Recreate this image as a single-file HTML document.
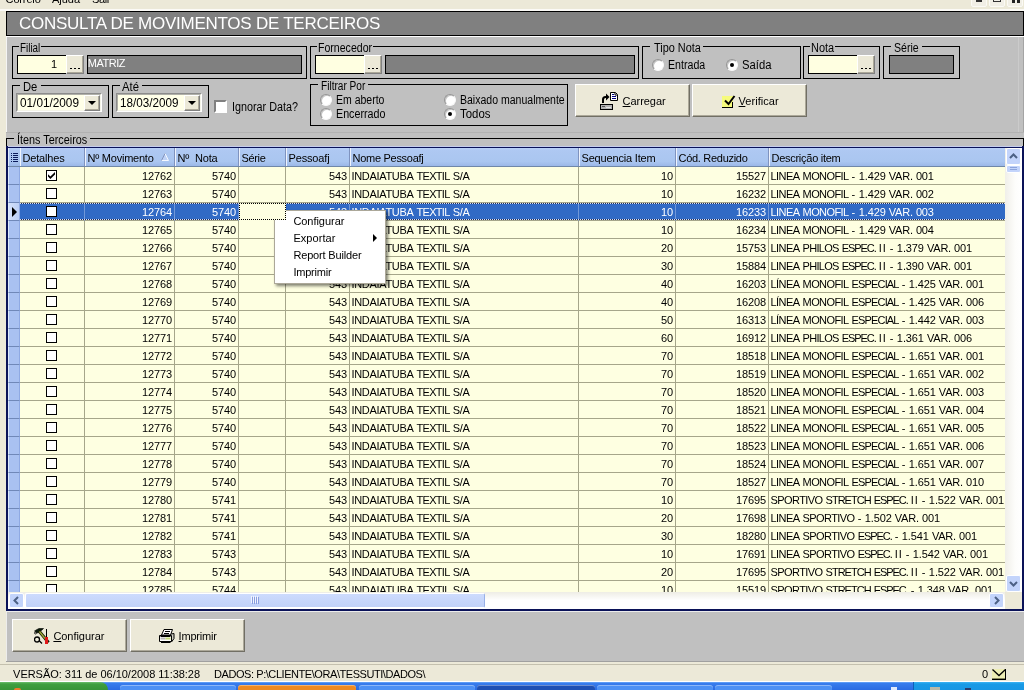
<!DOCTYPE html>
<html lang="pt-BR">
<head>
<meta charset="utf-8">
<title>Consulta de Movimentos de Terceiros</title>
<style>
*{box-sizing:border-box;margin:0;padding:0}
html,body{width:1024px;height:690px;overflow:hidden}
#root{position:absolute;left:0;top:0;width:1024px;height:690px;will-change:transform}
body{position:relative;background:#ece9d8;font-family:"Liberation Sans",sans-serif;font-size:11px;color:#000;line-height:1}
.abs,.gb,.gl,.inp,.dots,.dark,.btn,.date,.rad,.chk,.txt{position:absolute}
/* frame */
#menubar{position:absolute;left:0;top:0;width:1024px;height:9px;background:#ece9d8;overflow:hidden}
#menubar span{position:absolute;top:-6px;font-size:11px;white-space:nowrap}
.wb{position:absolute;top:-10px;width:16px;height:17px;background:#f1efe6;border:1px solid #fbfaf5;border-radius:2px;overflow:hidden}
.wb i{position:absolute;background:#333;margin-top:9px}
#hl{position:absolute;left:0;top:9px;width:1024px;height:2px;background:#fbfaf6}
#panel{position:absolute;left:6px;top:11px;width:1018px;height:651px;background:#c0c0c0}
#title{position:absolute;left:6px;top:11px;width:1018px;height:25px;background:#808080;border:1px solid #000}
#title span{position:absolute;top:3px;color:#fff;white-space:nowrap}
#tline{position:absolute;left:6px;top:36px;width:1018px;height:1px;background:#fff}
/* group boxes */
.gb{border:1px solid #000}
.gl{font-size:12px;white-space:nowrap;height:12px;line-height:12px}
.gap{position:absolute;height:1px;background:#c0c0c0}
.inp{background:#ffffe1;border:1px solid #000;border-right:none;height:19px;font-size:11px;text-align:right;line-height:17px;padding-right:9px}
.dots{background:#ece9d8;height:19px;width:18px;border-top:1px solid #fff;border-left:1px solid #fff;border-right:1px solid #808080;border-bottom:1px solid #808080;box-shadow:inset -1px -1px 0 #aca899}
.dots i{position:absolute;top:12px;width:2px;height:1px;background:#000}
.dark{background:#808080;border:1px solid #000;height:19px;color:#fff;font-size:11px;line-height:15px;padding-left:1px}
.btn{background:#ece9d8;height:33px;border-top:1px solid #fff;border-left:1px solid #fff;border-right:1px solid #716f64;border-bottom:1px solid #716f64;box-shadow:inset -1px -1px 0 #aca899}
.btn .t{position:absolute;font-size:11px;white-space:nowrap}
.btn u{text-decoration:underline}
.date{height:19px;width:86px;background:#ffffe8;border:2px solid;border-color:#8c8c8c #fff #fff #8c8c8c}
.date:before{content:"";position:absolute;left:-1px;top:-1px;right:-1px;bottom:-1px;border:1px solid;border-color:#b0b0a8 #f4f4e8 #f4f4e8 #b0b0a8}
.date span{position:absolute;top:2px;font-size:12px;line-height:13px;white-space:nowrap}
.date b{position:absolute;right:0px;top:0px;width:16px;height:16px;background:#ece9d8;border-top:1px solid #fff;border-left:1px solid #fff;border-right:1px solid #808080;border-bottom:1px solid #808080;box-shadow:inset -1px -1px 0 #aca899}
.date b:after{content:"";position:absolute;left:3px;top:5px;border-left:4px solid transparent;border-right:4px solid transparent;border-top:4px solid #000}
.rad{width:12px;height:12px;border-radius:50%;background:#fff;border:1px solid;border-color:#949494 #f8f8f8 #f8f8f8 #949494;box-shadow:inset 1px 1px 0 #c4c4c4}
.rad.on:after{content:"";position:absolute;left:3px;top:3px;width:4px;height:4px;border-radius:50%;background:#000}
.txt{font-size:12px;white-space:nowrap;line-height:13px}
.chk{width:13px;height:13px;background:#fff;border:2px solid;border-color:#808080 #fff #fff #808080}
/* grid */
#ggb{position:absolute;left:6px;top:138px;width:1018px;height:473px;border:1px solid #000;border-bottom:none}
#grid{position:absolute;left:6px;top:146px;width:1018px;height:465px;background:#feffe1;border:2px solid #0a1258;overflow:hidden}
#ghead{position:absolute;left:8px;top:148px;width:997px;height:19px;background:linear-gradient(#b8d0f8 0,#aec8f2 15%,#aac6f0 75%,#9cb8e8 100%);border-bottom:1px solid #7088a8}
.hc{position:absolute;top:148px;height:18px;border-left:1px solid #eef3fd;border-right:1px solid #7f93bf;font-size:11px;line-height:21px;padding-left:1.5px;white-space:nowrap;overflow:hidden;color:#000}
.hc .sorta{position:absolute;left:75px;top:5px}
.row{position:absolute;left:0;width:1005px;height:18px}
.row .ind{position:absolute;left:8px;top:0;width:12px;height:18px;background:#a9c1f1;border-left:1px solid #dde9fc;border-right:1px solid #8fa9e3;border-bottom:1px solid #7088b8}
.row .c{position:absolute;top:0;height:18px;border-right:1px solid #a6a68a;border-bottom:1px solid #a6a68a;background:#feffe1;font-size:11px;line-height:18px;white-space:nowrap;overflow:hidden}
.row .c.ar{text-align:right;padding-right:2px}
.row .c.al{padding-left:1.5px}
.row .c.ac{text-align:center}
.row.sel .c{background:#316ac5;color:#fff;border-right-color:#7097d8}
.row.sel .dot{position:absolute;left:20px;width:985px;height:1px;background:repeating-linear-gradient(90deg,#dde4f2 0 1px,#1c2c60 1px 2px)}
.row.sel .c.foc{background:#feffe1;border:1px dotted #000;z-index:2;height:17px}
.row.sel .ind{background:linear-gradient(90deg,#d4e0fa,#bccff5)}
.cur{position:absolute;left:3px;top:4px;border-top:5px solid transparent;border-bottom:5px solid transparent;border-left:5px solid #000}
.cb{position:absolute;left:26px;top:3px;width:11px;height:11px;border:1px solid #000;background:#fff}
.cb svg{position:absolute;left:0;top:0}
/* menu */
#ctx{position:absolute;left:274px;top:210px;width:112px;height:74px;background:#fff;border:1px solid #aca899;box-shadow:2px 2px 3px rgba(0,0,0,.5)}
#ctx div{position:absolute;left:18.4px;font-size:11px;white-space:nowrap;line-height:13px}
#ctx i{position:absolute;left:98px;top:23px;border-top:4px solid transparent;border-bottom:4px solid transparent;border-left:4px solid #000}
/* status */
#status{position:absolute;left:0;top:662px;width:1024px;height:20px;background:#ece9d8;border-top:1px solid #ece9d8;border-bottom:1px solid #fff;box-shadow:inset 0 1px 0 #ece9d8,inset 0 2px 0 #c4c0ae}
#status span{position:absolute;top:6px;font-size:11px;white-space:nowrap}
#task{position:absolute;left:0;top:682px;width:1024px;height:8px;background:linear-gradient(#3a80ef,#2a6be2);overflow:hidden}
.tb{top:3px;height:6px;border-radius:3px 3px 0 0;box-shadow:inset 0 1px 0 rgba(255,255,255,.35)}
</style>
</head>
<body>
<div id="root">
<div id="menubar"><span style="left:5.6px;letter-spacing:-0.15px">Correio</span><span style="left:52px;letter-spacing:-0.03px">Ajuda</span><span style="left:92px;letter-spacing:-0.39px">Sair</span></div>
<div class="wb" style="left:971px"><i style="left:4px;top:0;width:6px;height:2px"></i></div>
<div class="wb" style="left:989px"><i style="left:3px;top:-6px;width:8px;height:8px;background:none;border:1px solid #333"></i></div>
<div class="wb" style="left:1007px"><i style="left:4px;top:0;width:3px;height:3px;background:#222"></i><i style="left:9px;top:0;width:3px;height:3px;background:#222"></i></div>
<div id="hl"></div>
<div id="panel"></div>
<div id="title"><span style="left:11.9px;font-size:17px;letter-spacing:-0.25px">CONSULTA DE MOVIMENTOS DE TERCEIROS</span></div>
<div id="tline"></div>
<div class="abs" style="left:6px;top:37px;width:1px;height:95px;background:#f4f4f4"></div>
<div class="abs" style="left:1018px;top:37px;width:1px;height:95px;background:#cbcbcb"></div>
<div class="abs" style="left:1023px;top:37px;width:1px;height:95px;background:#a4a4a4"></div>

<!-- Filial -->
<div class="gb" style="left:12px;top:46px;width:295px;height:33px"></div>
<div class="gap" style="left:19px;top:46px;width:22px"></div>
<div class="gl" style="top:42px;left:20.0px;font-size:12px;transform:scaleX(0.820);transform-origin:0 0">Filial</div>
<div class="inp" style="left:17px;top:55px;width:49px"><span style="">1</span></div>
<div class="dots" style="left:66px;top:55px"><i style="left:3px"></i><i style="left:7px"></i><i style="left:11px"></i></div>
<div class="dark" style="left:87px;top:55px;width:215px"><span class="abs" style="top:0px;left:-0.3px;font-size:11px;letter-spacing:-0.48px">MATRIZ</span></div>
<!-- Fornecedor -->
<div class="gb" style="left:310px;top:46px;width:329px;height:33px"></div>
<div class="gap" style="left:317px;top:46px;width:56px"></div>
<div class="gl" style="top:42px;left:318.3px;font-size:12px;transform:scaleX(0.881);transform-origin:0 0">Fornecedor</div>
<div class="inp" style="left:315px;top:55px;width:49px"></div>
<div class="dots" style="left:364px;top:55px"><i style="left:3px"></i><i style="left:7px"></i><i style="left:11px"></i></div>
<div class="dark" style="left:385px;top:55px;width:250px"></div>
<!-- Tipo Nota -->
<div class="gb" style="left:642px;top:46px;width:159px;height:33px"></div>
<div class="gap" style="left:650px;top:46px;width:53px"></div>
<div class="gl" style="top:42px;left:653.5px;font-size:12px;transform:scaleX(0.909);transform-origin:0 0">Tipo Nota</div>
<div class="rad" style="left:652px;top:59px"></div><div class="txt" style="top:59px;left:668.0px;font-size:12px;transform:scaleX(0.885);transform-origin:0 0">Entrada</div>
<div class="rad on" style="left:726px;top:59px"></div><div class="txt" style="top:59px;left:741.9px;font-size:12px;transform:scaleX(0.939);transform-origin:0 0">Saída</div>
<!-- Nota -->
<div class="gb" style="left:803px;top:46px;width:77px;height:33px"></div>
<div class="gap" style="left:810px;top:46px;width:25px"></div>
<div class="gl" style="top:42px;left:811.3px;font-size:12px;transform:scaleX(0.912);transform-origin:0 0">Nota</div>
<div class="inp" style="left:808px;top:55px;width:49px"></div>
<div class="dots" style="left:857px;top:55px"><i style="left:3px"></i><i style="left:7px"></i><i style="left:11px"></i></div>
<!-- Serie -->
<div class="gb" style="left:883px;top:46px;width:77px;height:33px"></div>
<div class="gap" style="left:891px;top:46px;width:31px"></div>
<div class="gl" style="top:42px;left:894.3px;font-size:12px;transform:scaleX(0.881);transform-origin:0 0">Série</div>
<div class="dark" style="left:889px;top:55px;width:65px"></div>
<!-- De / Ate -->
<div class="gb" style="left:12px;top:85px;width:97px;height:33px"></div>
<div class="gap" style="left:20px;top:85px;width:21px"></div>
<div class="gl" style="top:81px;left:23.0px;font-size:12px;transform:scaleX(0.934);transform-origin:0 0">De</div>
<div class="date" style="left:16px;top:93px"><span style="left:1.8px;font-size:12px;transform:scaleX(0.982);transform-origin:0 0">01/01/2009</span><b></b></div>
<div class="gb" style="left:112px;top:85px;width:97px;height:33px"></div>
<div class="gap" style="left:120px;top:85px;width:22px"></div>
<div class="gl" style="top:81px;left:122.4px;font-size:12px;transform:scaleX(0.941);transform-origin:0 0">Até</div>
<div class="date" style="left:116px;top:93px"><span style="left:1.9px;font-size:12px;transform:scaleX(0.974);transform-origin:0 0">18/03/2009</span><b></b></div>
<div class="chk" style="left:214px;top:100px"></div>
<div class="txt" style="top:101px;left:231.9px;font-size:12px;transform:scaleX(0.898);transform-origin:0 0">Ignorar Data?</div>
<!-- Filtrar Por -->
<div class="gb" style="left:310px;top:84px;width:258px;height:42px"></div>
<div class="gap" style="left:318px;top:84px;width:50px"></div>
<div class="gl" style="top:80px;left:321.0px;font-size:12px;transform:scaleX(0.842);transform-origin:0 0">Filtrar Por</div>
<div class="rad" style="left:320px;top:94px"></div><div class="txt" style="top:94px;left:336.0px;font-size:12px;transform:scaleX(0.874);transform-origin:0 0">Em aberto</div>
<div class="rad" style="left:320px;top:108px"></div><div class="txt" style="top:108px;left:336.0px;font-size:12px;transform:scaleX(0.892);transform-origin:0 0">Encerrado</div>
<div class="rad" style="left:444px;top:94px"></div><div class="txt" style="top:94px;left:460.0px;font-size:12px;transform:scaleX(0.877);transform-origin:0 0">Baixado manualmente</div>
<div class="rad on" style="left:444px;top:108px"></div><div class="txt" style="top:108px;left:459.9px;font-size:12px;transform:scaleX(0.951);transform-origin:0 0">Todos</div>
<!-- buttons -->
<div class="btn" style="left:575px;top:84px;width:115px">
<svg class="abs" style="left:24px;top:7px" width="18" height="18" viewBox="0 0 18 18"><path d="M10.500 0.500H15.500L17.500 2.500V8.500H10.500Z" fill="#fff" stroke="#000"/><path d="M15 1v2h2" fill="none" stroke="#000"/><path d="M12 2.500h2M12 4.500h4M12 6.500h4" stroke="#000080"/><path d="M3 11V7.500Q3 5 5.500 5H7" fill="none" stroke="#000" stroke-width="2"/><path d="M6 1.500L9.500 5L6 8.500Z" fill="#000"/><rect x="0.500" y="12.500" width="12" height="5" fill="#b4b4b4" stroke="#000"/><path d="M2 14.500h3" stroke="#555"/><path d="M6 15.500h5" stroke="#e4e4e4"/></svg>
<span class="t" style="left:46.6px;top:11px;letter-spacing:-0.05px"><u>C</u>arregar</span></div>
<div class="btn" style="left:692px;top:84px;width:115px">
<svg class="abs" style="left:29px;top:9px" width="14" height="15" viewBox="0 0 14 15"><rect x="0" y="2" width="11" height="12" fill="#f6fb7c"/><path d="M0 13.500H11M10.500 8V14" stroke="#000"/><path d="M3 6.500L6.500 10L12.500 2" fill="none" stroke="#000" stroke-width="2"/></svg>
<span class="t" style="left:45.6px;top:11px;letter-spacing:0.03px"><u>V</u>erificar</span></div>

<!-- separators -->
<div class="abs" style="left:6px;top:132px;width:1018px;height:1px;background:#b2b2b2"></div>

<!-- grid -->
<div id="ggb"></div>
<div class="gap" style="left:14px;top:138px;width:76px"></div>
<div class="gl" style="top:134px;left:17.2px;font-size:12px;transform:scaleX(0.902);transform-origin:0 0">Ítens Terceiros</div>
<div id="grid"></div>
<div id="ghead"></div>
<div class="abs" style="left:8px;top:148px;width:12px;height:18px;border-left:1px solid #dfe9fb">
<svg class="abs" style="left:2px;top:5px" width="8" height="10" viewBox="0 0 8 10"><path d="M0 0.500h1M2 0.500h5M0 2.500h1M2 2.500h5M0 4.500h1M2 4.500h5M0 6.500h1M2 6.500h5M0 8.500h1M2 8.500h5" stroke="#0a1a5a"/></svg></div>
<div class="abs" style="left:8px;top:146px;width:1014px;height:1px;background:#c4ccec"></div>
<div class="hc" style="left:20px;width:65px"><span style="letter-spacing:-0.18px">Detalhes</span></div>
<div class="hc" style="left:85px;width:90px"><span style="letter-spacing:-0.23px">Nº Movimento</span><svg class="sorta" width="8" height="8" viewBox="0 0 8 8"><path d="M4 0.500L7.500 7.500H0.500Z" fill="#bfd2f6"/><path d="M4 0.500L7.500 7.500H0.500" fill="none" stroke="#f4f8ff" stroke-width="1"/><path d="M0.500 7.500L4 0.500" fill="none" stroke="#8494bc" stroke-width="1"/></svg></div>
<div class="hc" style="left:175px;width:64px"><span style="letter-spacing:-0.16px">Nº&nbsp; Nota</span></div>
<div class="hc" style="left:239px;width:47px"><span style="letter-spacing:-0.34px">Série</span></div>
<div class="hc" style="left:286px;width:64px"><span style="letter-spacing:-0.15px">Pessoafj</span></div>
<div class="hc" style="left:350px;width:229px"><span style="letter-spacing:-0.28px">Nome Pessoafj</span></div>
<div class="hc" style="left:579px;width:97px"><span style="letter-spacing:-0.17px">Sequencia Item</span></div>
<div class="hc" style="left:676px;width:93px"><span style="letter-spacing:-0.29px">Cód. Reduzido</span></div>
<div class="hc" style="left:769px;width:237px"><span style="letter-spacing:-0.27px">Descrição item</span></div>
<div class="abs" style="left:0;top:0;width:1005px;height:592px;overflow:hidden">
<div class="row" style="top:167px">
<div class="ind"></div>
<div class="c ac" style="left:20px;width:65px"><b class="cb"><svg width="9" height="9" viewBox="0 0 9 9"><path d="M1 3.2 L3.4 5.6 L8 1 L8 3.4 L3.4 8 L1 5.6 Z" fill="#000"/></svg></b></div>
<div class="c ar" style="left:85px;width:90px"><span style="letter-spacing:-0.12px">12762</span></div>
<div class="c ar" style="left:175px;width:64px"><span style="letter-spacing:-0.12px">5740</span></div>
<div class="c al" style="left:239px;width:47px"><span style="letter-spacing:0.00px"></span></div>
<div class="c ar" style="left:286px;width:64px"><span style="letter-spacing:-0.12px">543</span></div>
<div class="c al" style="left:350px;width:229px"><span style="letter-spacing:-0.32px">INDAIATUBA</span> <span style="letter-spacing:-0.71px">TEXTIL</span> <span style="letter-spacing:-0.24px">S/A</span></div>
<div class="c ar" style="left:579px;width:97px"><span style="letter-spacing:-0.12px">10</span></div>
<div class="c ar" style="left:676px;width:93px"><span style="letter-spacing:-0.12px">15527</span></div>
<div class="c al" style="left:769px;width:237px"><span style="letter-spacing:-0.56px">LINEA</span> <span style="letter-spacing:-0.59px">MONOFIL</span> <span style="letter-spacing:0.34px">-</span> <span style="letter-spacing:-0.10px">1.429</span> <span style="letter-spacing:-0.21px">VAR.</span> <span style="letter-spacing:-0.12px">001</span></div>
</div>
<div class="row" style="top:185px">
<div class="ind"></div>
<div class="c ac" style="left:20px;width:65px"><b class="cb"></b></div>
<div class="c ar" style="left:85px;width:90px"><span style="letter-spacing:-0.12px">12763</span></div>
<div class="c ar" style="left:175px;width:64px"><span style="letter-spacing:-0.12px">5740</span></div>
<div class="c al" style="left:239px;width:47px"><span style="letter-spacing:0.00px"></span></div>
<div class="c ar" style="left:286px;width:64px"><span style="letter-spacing:-0.12px">543</span></div>
<div class="c al" style="left:350px;width:229px"><span style="letter-spacing:-0.32px">INDAIATUBA</span> <span style="letter-spacing:-0.71px">TEXTIL</span> <span style="letter-spacing:-0.24px">S/A</span></div>
<div class="c ar" style="left:579px;width:97px"><span style="letter-spacing:-0.12px">10</span></div>
<div class="c ar" style="left:676px;width:93px"><span style="letter-spacing:-0.12px">16232</span></div>
<div class="c al" style="left:769px;width:237px"><span style="letter-spacing:-0.56px">LINEA</span> <span style="letter-spacing:-0.59px">MONOFIL</span> <span style="letter-spacing:0.34px">-</span> <span style="letter-spacing:-0.10px">1.429</span> <span style="letter-spacing:-0.21px">VAR.</span> <span style="letter-spacing:-0.12px">002</span></div>
</div>
<div class="row sel" style="top:203px">
<div class="ind"><i class=cur></i></div>
<div class="c ac" style="left:20px;width:65px"><b class="cb"></b></div>
<div class="c ar" style="left:85px;width:90px"><span style="letter-spacing:-0.12px">12764</span></div>
<div class="c ar" style="left:175px;width:64px"><span style="letter-spacing:-0.12px">5740</span></div>
<div class="c al foc" style="left:239px;width:47px"><span style="letter-spacing:0.00px"></span></div>
<div class="c ar" style="left:286px;width:64px"><span style="letter-spacing:-0.12px">543</span></div>
<div class="c al" style="left:350px;width:229px"><span style="letter-spacing:-0.32px">INDAIATUBA</span> <span style="letter-spacing:-0.71px">TEXTIL</span> <span style="letter-spacing:-0.24px">S/A</span></div>
<div class="c ar" style="left:579px;width:97px"><span style="letter-spacing:-0.12px">10</span></div>
<div class="c ar" style="left:676px;width:93px"><span style="letter-spacing:-0.12px">16233</span></div>
<div class="c al" style="left:769px;width:237px"><span style="letter-spacing:-0.56px">LINEA</span> <span style="letter-spacing:-0.59px">MONOFIL</span> <span style="letter-spacing:0.34px">-</span> <span style="letter-spacing:-0.10px">1.429</span> <span style="letter-spacing:-0.21px">VAR.</span> <span style="letter-spacing:-0.12px">003</span></div>
<div class="dot" style="top:0"></div><div class="dot" style="top:16px"></div>
</div>
<div class="row" style="top:221px">
<div class="ind"></div>
<div class="c ac" style="left:20px;width:65px"><b class="cb"></b></div>
<div class="c ar" style="left:85px;width:90px"><span style="letter-spacing:-0.12px">12765</span></div>
<div class="c ar" style="left:175px;width:64px"><span style="letter-spacing:-0.12px">5740</span></div>
<div class="c al" style="left:239px;width:47px"><span style="letter-spacing:0.00px"></span></div>
<div class="c ar" style="left:286px;width:64px"><span style="letter-spacing:-0.12px">543</span></div>
<div class="c al" style="left:350px;width:229px"><span style="letter-spacing:-0.32px">INDAIATUBA</span> <span style="letter-spacing:-0.71px">TEXTIL</span> <span style="letter-spacing:-0.24px">S/A</span></div>
<div class="c ar" style="left:579px;width:97px"><span style="letter-spacing:-0.12px">10</span></div>
<div class="c ar" style="left:676px;width:93px"><span style="letter-spacing:-0.12px">16234</span></div>
<div class="c al" style="left:769px;width:237px"><span style="letter-spacing:-0.56px">LINEA</span> <span style="letter-spacing:-0.59px">MONOFIL</span> <span style="letter-spacing:0.34px">-</span> <span style="letter-spacing:-0.10px">1.429</span> <span style="letter-spacing:-0.21px">VAR.</span> <span style="letter-spacing:-0.12px">004</span></div>
</div>
<div class="row" style="top:239px">
<div class="ind"></div>
<div class="c ac" style="left:20px;width:65px"><b class="cb"></b></div>
<div class="c ar" style="left:85px;width:90px"><span style="letter-spacing:-0.12px">12766</span></div>
<div class="c ar" style="left:175px;width:64px"><span style="letter-spacing:-0.12px">5740</span></div>
<div class="c al" style="left:239px;width:47px"><span style="letter-spacing:0.00px"></span></div>
<div class="c ar" style="left:286px;width:64px"><span style="letter-spacing:-0.12px">543</span></div>
<div class="c al" style="left:350px;width:229px"><span style="letter-spacing:-0.32px">INDAIATUBA</span> <span style="letter-spacing:-0.71px">TEXTIL</span> <span style="letter-spacing:-0.24px">S/A</span></div>
<div class="c ar" style="left:579px;width:97px"><span style="letter-spacing:-0.12px">20</span></div>
<div class="c ar" style="left:676px;width:93px"><span style="letter-spacing:-0.12px">15753</span></div>
<div class="c al" style="left:769px;width:237px"><span style="letter-spacing:-0.56px">LINEA</span> <span style="letter-spacing:-0.72px">PHILOS</span> <span style="letter-spacing:-1.06px">ESPEC.</span> <span style="letter-spacing:0.94px">II</span> <span style="letter-spacing:0.34px">-</span> <span style="letter-spacing:-0.10px">1.379</span> <span style="letter-spacing:-0.21px">VAR.</span> <span style="letter-spacing:-0.12px">001</span></div>
</div>
<div class="row" style="top:257px">
<div class="ind"></div>
<div class="c ac" style="left:20px;width:65px"><b class="cb"></b></div>
<div class="c ar" style="left:85px;width:90px"><span style="letter-spacing:-0.12px">12767</span></div>
<div class="c ar" style="left:175px;width:64px"><span style="letter-spacing:-0.12px">5740</span></div>
<div class="c al" style="left:239px;width:47px"><span style="letter-spacing:0.00px"></span></div>
<div class="c ar" style="left:286px;width:64px"><span style="letter-spacing:-0.12px">543</span></div>
<div class="c al" style="left:350px;width:229px"><span style="letter-spacing:-0.32px">INDAIATUBA</span> <span style="letter-spacing:-0.71px">TEXTIL</span> <span style="letter-spacing:-0.24px">S/A</span></div>
<div class="c ar" style="left:579px;width:97px"><span style="letter-spacing:-0.12px">30</span></div>
<div class="c ar" style="left:676px;width:93px"><span style="letter-spacing:-0.12px">15884</span></div>
<div class="c al" style="left:769px;width:237px"><span style="letter-spacing:-0.56px">LINEA</span> <span style="letter-spacing:-0.72px">PHILOS</span> <span style="letter-spacing:-1.06px">ESPEC.</span> <span style="letter-spacing:0.94px">II</span> <span style="letter-spacing:0.34px">-</span> <span style="letter-spacing:-0.10px">1.390</span> <span style="letter-spacing:-0.21px">VAR.</span> <span style="letter-spacing:-0.12px">001</span></div>
</div>
<div class="row" style="top:275px">
<div class="ind"></div>
<div class="c ac" style="left:20px;width:65px"><b class="cb"></b></div>
<div class="c ar" style="left:85px;width:90px"><span style="letter-spacing:-0.12px">12768</span></div>
<div class="c ar" style="left:175px;width:64px"><span style="letter-spacing:-0.12px">5740</span></div>
<div class="c al" style="left:239px;width:47px"><span style="letter-spacing:0.00px"></span></div>
<div class="c ar" style="left:286px;width:64px"><span style="letter-spacing:-0.12px">543</span></div>
<div class="c al" style="left:350px;width:229px"><span style="letter-spacing:-0.32px">INDAIATUBA</span> <span style="letter-spacing:-0.71px">TEXTIL</span> <span style="letter-spacing:-0.24px">S/A</span></div>
<div class="c ar" style="left:579px;width:97px"><span style="letter-spacing:-0.12px">40</span></div>
<div class="c ar" style="left:676px;width:93px"><span style="letter-spacing:-0.12px">16203</span></div>
<div class="c al" style="left:769px;width:237px"><span style="letter-spacing:-0.56px">LÍNEA</span> <span style="letter-spacing:-0.59px">MONOFIL</span> <span style="letter-spacing:-0.85px">ESPECIAL</span> <span style="letter-spacing:0.34px">-</span> <span style="letter-spacing:-0.10px">1.425</span> <span style="letter-spacing:-0.21px">VAR.</span> <span style="letter-spacing:-0.12px">001</span></div>
</div>
<div class="row" style="top:293px">
<div class="ind"></div>
<div class="c ac" style="left:20px;width:65px"><b class="cb"></b></div>
<div class="c ar" style="left:85px;width:90px"><span style="letter-spacing:-0.12px">12769</span></div>
<div class="c ar" style="left:175px;width:64px"><span style="letter-spacing:-0.12px">5740</span></div>
<div class="c al" style="left:239px;width:47px"><span style="letter-spacing:0.00px"></span></div>
<div class="c ar" style="left:286px;width:64px"><span style="letter-spacing:-0.12px">543</span></div>
<div class="c al" style="left:350px;width:229px"><span style="letter-spacing:-0.32px">INDAIATUBA</span> <span style="letter-spacing:-0.71px">TEXTIL</span> <span style="letter-spacing:-0.24px">S/A</span></div>
<div class="c ar" style="left:579px;width:97px"><span style="letter-spacing:-0.12px">40</span></div>
<div class="c ar" style="left:676px;width:93px"><span style="letter-spacing:-0.12px">16208</span></div>
<div class="c al" style="left:769px;width:237px"><span style="letter-spacing:-0.56px">LÍNEA</span> <span style="letter-spacing:-0.59px">MONOFIL</span> <span style="letter-spacing:-0.85px">ESPECIAL</span> <span style="letter-spacing:0.34px">-</span> <span style="letter-spacing:-0.10px">1.425</span> <span style="letter-spacing:-0.21px">VAR.</span> <span style="letter-spacing:-0.12px">006</span></div>
</div>
<div class="row" style="top:311px">
<div class="ind"></div>
<div class="c ac" style="left:20px;width:65px"><b class="cb"></b></div>
<div class="c ar" style="left:85px;width:90px"><span style="letter-spacing:-0.12px">12770</span></div>
<div class="c ar" style="left:175px;width:64px"><span style="letter-spacing:-0.12px">5740</span></div>
<div class="c al" style="left:239px;width:47px"><span style="letter-spacing:0.00px"></span></div>
<div class="c ar" style="left:286px;width:64px"><span style="letter-spacing:-0.12px">543</span></div>
<div class="c al" style="left:350px;width:229px"><span style="letter-spacing:-0.32px">INDAIATUBA</span> <span style="letter-spacing:-0.71px">TEXTIL</span> <span style="letter-spacing:-0.24px">S/A</span></div>
<div class="c ar" style="left:579px;width:97px"><span style="letter-spacing:-0.12px">50</span></div>
<div class="c ar" style="left:676px;width:93px"><span style="letter-spacing:-0.12px">16313</span></div>
<div class="c al" style="left:769px;width:237px"><span style="letter-spacing:-0.56px">LÍNEA</span> <span style="letter-spacing:-0.59px">MONOFIL</span> <span style="letter-spacing:-0.85px">ESPECIAL</span> <span style="letter-spacing:0.34px">-</span> <span style="letter-spacing:-0.10px">1.442</span> <span style="letter-spacing:-0.21px">VAR.</span> <span style="letter-spacing:-0.12px">003</span></div>
</div>
<div class="row" style="top:329px">
<div class="ind"></div>
<div class="c ac" style="left:20px;width:65px"><b class="cb"></b></div>
<div class="c ar" style="left:85px;width:90px"><span style="letter-spacing:-0.12px">12771</span></div>
<div class="c ar" style="left:175px;width:64px"><span style="letter-spacing:-0.12px">5740</span></div>
<div class="c al" style="left:239px;width:47px"><span style="letter-spacing:0.00px"></span></div>
<div class="c ar" style="left:286px;width:64px"><span style="letter-spacing:-0.12px">543</span></div>
<div class="c al" style="left:350px;width:229px"><span style="letter-spacing:-0.32px">INDAIATUBA</span> <span style="letter-spacing:-0.71px">TEXTIL</span> <span style="letter-spacing:-0.24px">S/A</span></div>
<div class="c ar" style="left:579px;width:97px"><span style="letter-spacing:-0.12px">60</span></div>
<div class="c ar" style="left:676px;width:93px"><span style="letter-spacing:-0.12px">16912</span></div>
<div class="c al" style="left:769px;width:237px"><span style="letter-spacing:-0.56px">LINEA</span> <span style="letter-spacing:-0.72px">PHILOS</span> <span style="letter-spacing:-1.06px">ESPEC.</span> <span style="letter-spacing:0.94px">II</span> <span style="letter-spacing:0.34px">-</span> <span style="letter-spacing:-0.10px">1.361</span> <span style="letter-spacing:-0.21px">VAR.</span> <span style="letter-spacing:-0.12px">006</span></div>
</div>
<div class="row" style="top:347px">
<div class="ind"></div>
<div class="c ac" style="left:20px;width:65px"><b class="cb"></b></div>
<div class="c ar" style="left:85px;width:90px"><span style="letter-spacing:-0.12px">12772</span></div>
<div class="c ar" style="left:175px;width:64px"><span style="letter-spacing:-0.12px">5740</span></div>
<div class="c al" style="left:239px;width:47px"><span style="letter-spacing:0.00px"></span></div>
<div class="c ar" style="left:286px;width:64px"><span style="letter-spacing:-0.12px">543</span></div>
<div class="c al" style="left:350px;width:229px"><span style="letter-spacing:-0.32px">INDAIATUBA</span> <span style="letter-spacing:-0.71px">TEXTIL</span> <span style="letter-spacing:-0.24px">S/A</span></div>
<div class="c ar" style="left:579px;width:97px"><span style="letter-spacing:-0.12px">70</span></div>
<div class="c ar" style="left:676px;width:93px"><span style="letter-spacing:-0.12px">18518</span></div>
<div class="c al" style="left:769px;width:237px"><span style="letter-spacing:-0.56px">LINEA</span> <span style="letter-spacing:-0.59px">MONOFIL</span> <span style="letter-spacing:-0.85px">ESPECIAL</span> <span style="letter-spacing:0.34px">-</span> <span style="letter-spacing:-0.10px">1.651</span> <span style="letter-spacing:-0.21px">VAR.</span> <span style="letter-spacing:-0.12px">001</span></div>
</div>
<div class="row" style="top:365px">
<div class="ind"></div>
<div class="c ac" style="left:20px;width:65px"><b class="cb"></b></div>
<div class="c ar" style="left:85px;width:90px"><span style="letter-spacing:-0.12px">12773</span></div>
<div class="c ar" style="left:175px;width:64px"><span style="letter-spacing:-0.12px">5740</span></div>
<div class="c al" style="left:239px;width:47px"><span style="letter-spacing:0.00px"></span></div>
<div class="c ar" style="left:286px;width:64px"><span style="letter-spacing:-0.12px">543</span></div>
<div class="c al" style="left:350px;width:229px"><span style="letter-spacing:-0.32px">INDAIATUBA</span> <span style="letter-spacing:-0.71px">TEXTIL</span> <span style="letter-spacing:-0.24px">S/A</span></div>
<div class="c ar" style="left:579px;width:97px"><span style="letter-spacing:-0.12px">70</span></div>
<div class="c ar" style="left:676px;width:93px"><span style="letter-spacing:-0.12px">18519</span></div>
<div class="c al" style="left:769px;width:237px"><span style="letter-spacing:-0.56px">LINEA</span> <span style="letter-spacing:-0.59px">MONOFIL</span> <span style="letter-spacing:-0.85px">ESPECIAL</span> <span style="letter-spacing:0.34px">-</span> <span style="letter-spacing:-0.10px">1.651</span> <span style="letter-spacing:-0.21px">VAR.</span> <span style="letter-spacing:-0.12px">002</span></div>
</div>
<div class="row" style="top:383px">
<div class="ind"></div>
<div class="c ac" style="left:20px;width:65px"><b class="cb"></b></div>
<div class="c ar" style="left:85px;width:90px"><span style="letter-spacing:-0.12px">12774</span></div>
<div class="c ar" style="left:175px;width:64px"><span style="letter-spacing:-0.12px">5740</span></div>
<div class="c al" style="left:239px;width:47px"><span style="letter-spacing:0.00px"></span></div>
<div class="c ar" style="left:286px;width:64px"><span style="letter-spacing:-0.12px">543</span></div>
<div class="c al" style="left:350px;width:229px"><span style="letter-spacing:-0.32px">INDAIATUBA</span> <span style="letter-spacing:-0.71px">TEXTIL</span> <span style="letter-spacing:-0.24px">S/A</span></div>
<div class="c ar" style="left:579px;width:97px"><span style="letter-spacing:-0.12px">70</span></div>
<div class="c ar" style="left:676px;width:93px"><span style="letter-spacing:-0.12px">18520</span></div>
<div class="c al" style="left:769px;width:237px"><span style="letter-spacing:-0.56px">LINEA</span> <span style="letter-spacing:-0.59px">MONOFIL</span> <span style="letter-spacing:-0.85px">ESPECIAL</span> <span style="letter-spacing:0.34px">-</span> <span style="letter-spacing:-0.10px">1.651</span> <span style="letter-spacing:-0.21px">VAR.</span> <span style="letter-spacing:-0.12px">003</span></div>
</div>
<div class="row" style="top:401px">
<div class="ind"></div>
<div class="c ac" style="left:20px;width:65px"><b class="cb"></b></div>
<div class="c ar" style="left:85px;width:90px"><span style="letter-spacing:-0.12px">12775</span></div>
<div class="c ar" style="left:175px;width:64px"><span style="letter-spacing:-0.12px">5740</span></div>
<div class="c al" style="left:239px;width:47px"><span style="letter-spacing:0.00px"></span></div>
<div class="c ar" style="left:286px;width:64px"><span style="letter-spacing:-0.12px">543</span></div>
<div class="c al" style="left:350px;width:229px"><span style="letter-spacing:-0.32px">INDAIATUBA</span> <span style="letter-spacing:-0.71px">TEXTIL</span> <span style="letter-spacing:-0.24px">S/A</span></div>
<div class="c ar" style="left:579px;width:97px"><span style="letter-spacing:-0.12px">70</span></div>
<div class="c ar" style="left:676px;width:93px"><span style="letter-spacing:-0.12px">18521</span></div>
<div class="c al" style="left:769px;width:237px"><span style="letter-spacing:-0.56px">LINEA</span> <span style="letter-spacing:-0.59px">MONOFIL</span> <span style="letter-spacing:-0.85px">ESPECIAL</span> <span style="letter-spacing:0.34px">-</span> <span style="letter-spacing:-0.10px">1.651</span> <span style="letter-spacing:-0.21px">VAR.</span> <span style="letter-spacing:-0.12px">004</span></div>
</div>
<div class="row" style="top:419px">
<div class="ind"></div>
<div class="c ac" style="left:20px;width:65px"><b class="cb"></b></div>
<div class="c ar" style="left:85px;width:90px"><span style="letter-spacing:-0.12px">12776</span></div>
<div class="c ar" style="left:175px;width:64px"><span style="letter-spacing:-0.12px">5740</span></div>
<div class="c al" style="left:239px;width:47px"><span style="letter-spacing:0.00px"></span></div>
<div class="c ar" style="left:286px;width:64px"><span style="letter-spacing:-0.12px">543</span></div>
<div class="c al" style="left:350px;width:229px"><span style="letter-spacing:-0.32px">INDAIATUBA</span> <span style="letter-spacing:-0.71px">TEXTIL</span> <span style="letter-spacing:-0.24px">S/A</span></div>
<div class="c ar" style="left:579px;width:97px"><span style="letter-spacing:-0.12px">70</span></div>
<div class="c ar" style="left:676px;width:93px"><span style="letter-spacing:-0.12px">18522</span></div>
<div class="c al" style="left:769px;width:237px"><span style="letter-spacing:-0.56px">LINEA</span> <span style="letter-spacing:-0.59px">MONOFIL</span> <span style="letter-spacing:-0.85px">ESPECIAL</span> <span style="letter-spacing:0.34px">-</span> <span style="letter-spacing:-0.10px">1.651</span> <span style="letter-spacing:-0.21px">VAR.</span> <span style="letter-spacing:-0.12px">005</span></div>
</div>
<div class="row" style="top:437px">
<div class="ind"></div>
<div class="c ac" style="left:20px;width:65px"><b class="cb"></b></div>
<div class="c ar" style="left:85px;width:90px"><span style="letter-spacing:-0.12px">12777</span></div>
<div class="c ar" style="left:175px;width:64px"><span style="letter-spacing:-0.12px">5740</span></div>
<div class="c al" style="left:239px;width:47px"><span style="letter-spacing:0.00px"></span></div>
<div class="c ar" style="left:286px;width:64px"><span style="letter-spacing:-0.12px">543</span></div>
<div class="c al" style="left:350px;width:229px"><span style="letter-spacing:-0.32px">INDAIATUBA</span> <span style="letter-spacing:-0.71px">TEXTIL</span> <span style="letter-spacing:-0.24px">S/A</span></div>
<div class="c ar" style="left:579px;width:97px"><span style="letter-spacing:-0.12px">70</span></div>
<div class="c ar" style="left:676px;width:93px"><span style="letter-spacing:-0.12px">18523</span></div>
<div class="c al" style="left:769px;width:237px"><span style="letter-spacing:-0.56px">LINEA</span> <span style="letter-spacing:-0.59px">MONOFIL</span> <span style="letter-spacing:-0.85px">ESPECIAL</span> <span style="letter-spacing:0.34px">-</span> <span style="letter-spacing:-0.10px">1.651</span> <span style="letter-spacing:-0.21px">VAR.</span> <span style="letter-spacing:-0.12px">006</span></div>
</div>
<div class="row" style="top:455px">
<div class="ind"></div>
<div class="c ac" style="left:20px;width:65px"><b class="cb"></b></div>
<div class="c ar" style="left:85px;width:90px"><span style="letter-spacing:-0.12px">12778</span></div>
<div class="c ar" style="left:175px;width:64px"><span style="letter-spacing:-0.12px">5740</span></div>
<div class="c al" style="left:239px;width:47px"><span style="letter-spacing:0.00px"></span></div>
<div class="c ar" style="left:286px;width:64px"><span style="letter-spacing:-0.12px">543</span></div>
<div class="c al" style="left:350px;width:229px"><span style="letter-spacing:-0.32px">INDAIATUBA</span> <span style="letter-spacing:-0.71px">TEXTIL</span> <span style="letter-spacing:-0.24px">S/A</span></div>
<div class="c ar" style="left:579px;width:97px"><span style="letter-spacing:-0.12px">70</span></div>
<div class="c ar" style="left:676px;width:93px"><span style="letter-spacing:-0.12px">18524</span></div>
<div class="c al" style="left:769px;width:237px"><span style="letter-spacing:-0.56px">LINEA</span> <span style="letter-spacing:-0.59px">MONOFIL</span> <span style="letter-spacing:-0.85px">ESPECIAL</span> <span style="letter-spacing:0.34px">-</span> <span style="letter-spacing:-0.10px">1.651</span> <span style="letter-spacing:-0.21px">VAR.</span> <span style="letter-spacing:-0.12px">007</span></div>
</div>
<div class="row" style="top:473px">
<div class="ind"></div>
<div class="c ac" style="left:20px;width:65px"><b class="cb"></b></div>
<div class="c ar" style="left:85px;width:90px"><span style="letter-spacing:-0.12px">12779</span></div>
<div class="c ar" style="left:175px;width:64px"><span style="letter-spacing:-0.12px">5740</span></div>
<div class="c al" style="left:239px;width:47px"><span style="letter-spacing:0.00px"></span></div>
<div class="c ar" style="left:286px;width:64px"><span style="letter-spacing:-0.12px">543</span></div>
<div class="c al" style="left:350px;width:229px"><span style="letter-spacing:-0.32px">INDAIATUBA</span> <span style="letter-spacing:-0.71px">TEXTIL</span> <span style="letter-spacing:-0.24px">S/A</span></div>
<div class="c ar" style="left:579px;width:97px"><span style="letter-spacing:-0.12px">70</span></div>
<div class="c ar" style="left:676px;width:93px"><span style="letter-spacing:-0.12px">18527</span></div>
<div class="c al" style="left:769px;width:237px"><span style="letter-spacing:-0.56px">LINEA</span> <span style="letter-spacing:-0.59px">MONOFIL</span> <span style="letter-spacing:-0.85px">ESPECIAL</span> <span style="letter-spacing:0.34px">-</span> <span style="letter-spacing:-0.10px">1.651</span> <span style="letter-spacing:-0.21px">VAR.</span> <span style="letter-spacing:-0.12px">010</span></div>
</div>
<div class="row" style="top:491px">
<div class="ind"></div>
<div class="c ac" style="left:20px;width:65px"><b class="cb"></b></div>
<div class="c ar" style="left:85px;width:90px"><span style="letter-spacing:-0.12px">12780</span></div>
<div class="c ar" style="left:175px;width:64px"><span style="letter-spacing:-0.12px">5741</span></div>
<div class="c al" style="left:239px;width:47px"><span style="letter-spacing:0.00px"></span></div>
<div class="c ar" style="left:286px;width:64px"><span style="letter-spacing:-0.12px">543</span></div>
<div class="c al" style="left:350px;width:229px"><span style="letter-spacing:-0.32px">INDAIATUBA</span> <span style="letter-spacing:-0.71px">TEXTIL</span> <span style="letter-spacing:-0.24px">S/A</span></div>
<div class="c ar" style="left:579px;width:97px"><span style="letter-spacing:-0.12px">10</span></div>
<div class="c ar" style="left:676px;width:93px"><span style="letter-spacing:-0.12px">17695</span></div>
<div class="c al" style="left:769px;width:237px"><span style="letter-spacing:-0.58px">SPORTIVO</span> <span style="letter-spacing:-0.99px">STRETCH</span> <span style="letter-spacing:-1.06px">ESPEC.</span> <span style="letter-spacing:0.94px">II</span> <span style="letter-spacing:0.34px">-</span> <span style="letter-spacing:-0.10px">1.522</span> <span style="letter-spacing:-0.21px">VAR.</span> <span style="letter-spacing:-0.12px">001</span></div>
</div>
<div class="row" style="top:509px">
<div class="ind"></div>
<div class="c ac" style="left:20px;width:65px"><b class="cb"></b></div>
<div class="c ar" style="left:85px;width:90px"><span style="letter-spacing:-0.12px">12781</span></div>
<div class="c ar" style="left:175px;width:64px"><span style="letter-spacing:-0.12px">5741</span></div>
<div class="c al" style="left:239px;width:47px"><span style="letter-spacing:0.00px"></span></div>
<div class="c ar" style="left:286px;width:64px"><span style="letter-spacing:-0.12px">543</span></div>
<div class="c al" style="left:350px;width:229px"><span style="letter-spacing:-0.32px">INDAIATUBA</span> <span style="letter-spacing:-0.71px">TEXTIL</span> <span style="letter-spacing:-0.24px">S/A</span></div>
<div class="c ar" style="left:579px;width:97px"><span style="letter-spacing:-0.12px">20</span></div>
<div class="c ar" style="left:676px;width:93px"><span style="letter-spacing:-0.12px">17698</span></div>
<div class="c al" style="left:769px;width:237px"><span style="letter-spacing:-0.56px">LINEA</span> <span style="letter-spacing:-0.58px">SPORTIVO</span> <span style="letter-spacing:0.34px">-</span> <span style="letter-spacing:-0.10px">1.502</span> <span style="letter-spacing:-0.21px">VAR.</span> <span style="letter-spacing:-0.12px">001</span></div>
</div>
<div class="row" style="top:527px">
<div class="ind"></div>
<div class="c ac" style="left:20px;width:65px"><b class="cb"></b></div>
<div class="c ar" style="left:85px;width:90px"><span style="letter-spacing:-0.12px">12782</span></div>
<div class="c ar" style="left:175px;width:64px"><span style="letter-spacing:-0.12px">5741</span></div>
<div class="c al" style="left:239px;width:47px"><span style="letter-spacing:0.00px"></span></div>
<div class="c ar" style="left:286px;width:64px"><span style="letter-spacing:-0.12px">543</span></div>
<div class="c al" style="left:350px;width:229px"><span style="letter-spacing:-0.32px">INDAIATUBA</span> <span style="letter-spacing:-0.71px">TEXTIL</span> <span style="letter-spacing:-0.24px">S/A</span></div>
<div class="c ar" style="left:579px;width:97px"><span style="letter-spacing:-0.12px">30</span></div>
<div class="c ar" style="left:676px;width:93px"><span style="letter-spacing:-0.12px">18280</span></div>
<div class="c al" style="left:769px;width:237px"><span style="letter-spacing:-0.56px">LINEA</span> <span style="letter-spacing:-0.58px">SPORTIVO</span> <span style="letter-spacing:-1.06px">ESPEC.</span> <span style="letter-spacing:0.34px">-</span> <span style="letter-spacing:-0.10px">1.541</span> <span style="letter-spacing:-0.21px">VAR.</span> <span style="letter-spacing:-0.12px">001</span></div>
</div>
<div class="row" style="top:545px">
<div class="ind"></div>
<div class="c ac" style="left:20px;width:65px"><b class="cb"></b></div>
<div class="c ar" style="left:85px;width:90px"><span style="letter-spacing:-0.12px">12783</span></div>
<div class="c ar" style="left:175px;width:64px"><span style="letter-spacing:-0.12px">5743</span></div>
<div class="c al" style="left:239px;width:47px"><span style="letter-spacing:0.00px"></span></div>
<div class="c ar" style="left:286px;width:64px"><span style="letter-spacing:-0.12px">543</span></div>
<div class="c al" style="left:350px;width:229px"><span style="letter-spacing:-0.32px">INDAIATUBA</span> <span style="letter-spacing:-0.71px">TEXTIL</span> <span style="letter-spacing:-0.24px">S/A</span></div>
<div class="c ar" style="left:579px;width:97px"><span style="letter-spacing:-0.12px">10</span></div>
<div class="c ar" style="left:676px;width:93px"><span style="letter-spacing:-0.12px">17691</span></div>
<div class="c al" style="left:769px;width:237px"><span style="letter-spacing:-0.56px">LINEA</span> <span style="letter-spacing:-0.58px">SPORTIVO</span> <span style="letter-spacing:-1.06px">ESPEC.</span> <span style="letter-spacing:0.94px">II</span> <span style="letter-spacing:0.34px">-</span> <span style="letter-spacing:-0.10px">1.542</span> <span style="letter-spacing:-0.21px">VAR.</span> <span style="letter-spacing:-0.12px">001</span></div>
</div>
<div class="row" style="top:563px">
<div class="ind"></div>
<div class="c ac" style="left:20px;width:65px"><b class="cb"></b></div>
<div class="c ar" style="left:85px;width:90px"><span style="letter-spacing:-0.12px">12784</span></div>
<div class="c ar" style="left:175px;width:64px"><span style="letter-spacing:-0.12px">5743</span></div>
<div class="c al" style="left:239px;width:47px"><span style="letter-spacing:0.00px"></span></div>
<div class="c ar" style="left:286px;width:64px"><span style="letter-spacing:-0.12px">543</span></div>
<div class="c al" style="left:350px;width:229px"><span style="letter-spacing:-0.32px">INDAIATUBA</span> <span style="letter-spacing:-0.71px">TEXTIL</span> <span style="letter-spacing:-0.24px">S/A</span></div>
<div class="c ar" style="left:579px;width:97px"><span style="letter-spacing:-0.12px">20</span></div>
<div class="c ar" style="left:676px;width:93px"><span style="letter-spacing:-0.12px">17695</span></div>
<div class="c al" style="left:769px;width:237px"><span style="letter-spacing:-0.58px">SPORTIVO</span> <span style="letter-spacing:-0.99px">STRETCH</span> <span style="letter-spacing:-1.06px">ESPEC.</span> <span style="letter-spacing:0.94px">II</span> <span style="letter-spacing:0.34px">-</span> <span style="letter-spacing:-0.10px">1.522</span> <span style="letter-spacing:-0.21px">VAR.</span> <span style="letter-spacing:-0.12px">001</span></div>
</div>
<div class="row" style="top:581px">
<div class="ind"></div>
<div class="c ac" style="left:20px;width:65px"><b class="cb"></b></div>
<div class="c ar" style="left:85px;width:90px"><span style="letter-spacing:-0.12px">12785</span></div>
<div class="c ar" style="left:175px;width:64px"><span style="letter-spacing:-0.12px">5744</span></div>
<div class="c al" style="left:239px;width:47px"><span style="letter-spacing:0.00px"></span></div>
<div class="c ar" style="left:286px;width:64px"><span style="letter-spacing:-0.12px">543</span></div>
<div class="c al" style="left:350px;width:229px"><span style="letter-spacing:-0.32px">INDAIATUBA</span> <span style="letter-spacing:-0.71px">TEXTIL</span> <span style="letter-spacing:-0.24px">S/A</span></div>
<div class="c ar" style="left:579px;width:97px"><span style="letter-spacing:-0.12px">10</span></div>
<div class="c ar" style="left:676px;width:93px"><span style="letter-spacing:-0.12px">15519</span></div>
<div class="c al" style="left:769px;width:237px"><span style="letter-spacing:-0.58px">SPORTIVO</span> <span style="letter-spacing:-0.99px">STRETCH</span> <span style="letter-spacing:-1.06px">ESPEC.</span> <span style="letter-spacing:0.34px">-</span> <span style="letter-spacing:-0.10px">1.348</span> <span style="letter-spacing:-0.21px">VAR.</span> <span style="letter-spacing:-0.12px">001</span></div>
</div>
</div>
<!-- vscroll -->
<div class="abs" style="left:1005px;top:148px;width:17px;height:444px;background:linear-gradient(90deg,#f0efe9,#fdfdfb 60%,#fff)"></div>
<div class="abs sb" style="left:1006px;top:148px;width:15px;height:17px;background:#c3d4fb;border:1px solid #fff;border-radius:2px"><svg class="abs" style="left:2px;top:4px" width="9" height="6" viewBox="0 0 9 6"><path d="M1 5l3.500-3.500L8 5" fill="none" stroke="#4d6185" stroke-width="2"/></svg></div>
<div class="abs" style="left:1006px;top:165px;width:15px;height:8px;background:#c3d4fb;border:1px solid #fff;border-radius:2px"><i class="abs" style="left:3px;top:1px;width:7px;height:1px;background:#8ea5dc"></i><i class="abs" style="left:3px;top:3px;width:7px;height:1px;background:#8ea5dc"></i></div>
<div class="abs sb" style="left:1006px;top:575px;width:15px;height:17px;background:#c3d4fb;border:1px solid #fff;border-radius:2px"><svg class="abs" style="left:2px;top:5px" width="9" height="6" viewBox="0 0 9 6"><path d="M1 1l3.500 3.500L8 1" fill="none" stroke="#4d6185" stroke-width="2"/></svg></div>
<!-- hscroll -->
<div class="abs" style="left:8px;top:592px;width:997px;height:17px;background:linear-gradient(#eeede5,#fff 50%,#fff)"></div>
<div class="abs" style="left:1005px;top:592px;width:17px;height:17px;background:#ece9d8"></div>
<div class="abs sb" style="left:9px;top:593px;width:15px;height:15px;background:#c3d4fb;border:1px solid #fff;border-radius:2px"><svg class="abs" style="left:3px;top:2px" width="6" height="9" viewBox="0 0 6 9"><path d="M5 1L1.500 4.500 5 8" fill="none" stroke="#4d6185" stroke-width="2"/></svg></div>
<div class="abs" style="left:25px;top:593px;width:460px;height:15px;background:linear-gradient(#cddbfd,#c0d1f9);border:1px solid #fff;border-right-color:#98b0e8;border-radius:2px"></div>
<svg class="abs" style="left:251px;top:596px" width="8" height="8" viewBox="0 0 8 8"><path d="M0.500 0v7M2.500 0v7M4.500 0v7M6.500 0v7" stroke="#f2f5ff"/><path d="M1.500 1v7M3.500 1v7M5.500 1v7M7.500 1v7" stroke="#8a9ede"/></svg>
<div class="abs sb" style="left:989px;top:593px;width:15px;height:15px;background:#c3d4fb;border:1px solid #fff;border-radius:2px"><svg class="abs" style="left:4px;top:2px" width="6" height="9" viewBox="0 0 6 9"><path d="M1 1l3.500 3.500L1 8" fill="none" stroke="#4d6185" stroke-width="2"/></svg></div>

<!-- context menu -->
<div id="ctx"><div style="top:4px;letter-spacing:-0.04px">Configurar</div><div style="top:21px;letter-spacing:0.05px">Exportar</div><i></i><div style="top:38px;letter-spacing:-0.16px">Report Builder</div><div style="top:55px;letter-spacing:-0.21px">Imprimir</div></div>

<!-- bottom buttons -->
<div class="abs" style="left:6px;top:611px;width:1018px;height:1px;background:#ececec"></div>
<div class="abs" style="left:6px;top:611px;width:1px;height:51px;background:#ececec"></div>
<div class="btn" style="left:12px;top:619px;width:115px">
<svg class="abs" style="left:21px;top:8px" width="16" height="16" viewBox="0 0 16 16"><path d="M0.500 3L3 1.500L5 0.500H9.500L8 2L6.500 3L4 5L2.500 4.500Z" fill="#0a1a0a" stroke="#000" stroke-width=".6"/><path d="M5 3L14.500 14.500" stroke="#1a1a00" stroke-width="3"/><path d="M5.500 3.500L11 10.500" stroke="#9aa83a" stroke-width="1.400"/><path d="M12.500 1V9" stroke="#000"/><rect x="11" y="9" width="3" height="7" fill="#e01818"/><circle cx="3" cy="11.500" r="2.500" fill="none" stroke="#000" stroke-width="1.300"/><path d="M5 12.500L8 15.500" stroke="#000" stroke-width="1.300"/><circle cx="1.500" cy="5" r="1" fill="none" stroke="#000" stroke-width=".8"/></svg>
<span class="t" style="left:40.4px;top:11px;letter-spacing:-0.04px"><u>C</u>onfigurar</span></div>
<div class="btn" style="left:130px;top:619px;width:115px">
<svg class="abs" style="left:28px;top:9px" width="16" height="14" viewBox="0 0 16 14"><path d="M5 0.500H13.500L11.500 6H2.500Z" fill="#fff" stroke="#000"/><path d="M6 2.500h5M5 4.500h5" stroke="#000"/><path d="M12 5L15 4.500V9.500L12.500 13" fill="#cfcfc4" stroke="#000"/><path d="M0.500 6.500H12.500V12.500H0.500Z" fill="#fff" stroke="#000"/><path d="M1.500 7.500h10" stroke="#000"/><path d="M1.500 9.500h5" stroke="#b8b8b8" stroke-width="2"/><path d="M6.500 9.500h5" stroke="#c4d878" stroke-width="2"/><path d="M2 13.500h9.500" stroke="#000"/></svg>
<span class="t" style="left:47.6px;top:11px;letter-spacing:-0.21px"><u>I</u>mprimir</span></div>

<!-- status bar -->
<div class="abs" style="left:6px;top:661px;width:1018px;height:1px;background:#a0a0a0"></div>
<div id="status"><span style="left:13.1px;letter-spacing:-0.03px">VERSÃO: 311 de 06/10/2008 11:38:28</span><span style="left:214.1px;letter-spacing:-0.44px">DADOS: P:\CLIENTE\ORA\TESSUTI\DADOS\</span><span style="left:982px">0</span>
<svg class="abs" style="left:992px;top:6px" width="14" height="11" viewBox="0 0 14 11"><rect x="0" y="0" width="14" height="11" fill="#eeeeb4"/><path d="M0 10.500H14M13.500 0V11" stroke="#000"/><path d="M0 9.500H13" stroke="#8a8a60"/><path d="M0.500 0.500L7 6.500L13.500 0.500" fill="none" stroke="#000" stroke-width="1.300"/></svg></div>
<div id="task">
<div class="abs" style="left:0;top:0;width:1024px;height:1px;background:#5b9bf5"></div>
<div class="abs" style="left:0;top:0;width:108px;height:8px;background:linear-gradient(#6fc06f,#3f9f3f 2px,#379337);border-radius:0 9px 0 0"></div>
<div class="abs" style="left:14px;top:6px;width:7px;height:2px;background:#ee7a2a;border-radius:2px 2px 0 0"></div>
<div class="abs tb" style="left:120px;width:116px;background:#4c90f4"></div>
<div class="abs tb" style="left:238px;width:118px;background:#ee8a22"></div>
<div class="abs tb" style="left:359px;width:116px;background:#4c90f4"></div>
<div class="abs tb" style="left:477px;width:118px;background:#1e50b4"></div>
<div class="abs tb" style="left:597px;width:116px;background:#4c90f4"></div>
<div class="abs tb" style="left:715px;width:117px;background:#4c90f4"></div>
<div class="abs" style="left:913px;top:0;width:111px;height:8px;background:linear-gradient(#3cb4f4,#189ae6 2px,#1796e4);border-left:1px solid #0e5fb8"></div>
<div class="abs" style="left:891px;top:5px;width:6px;height:3px;background:#dfe9fb"></div>
<div class="abs" style="left:930px;top:5px;width:10px;height:3px;background:#b8b8a8"></div>
<div class="abs" style="left:965px;top:6px;width:6px;height:2px;background:#283a6a"></div>
</div>
</div>
</body>
</html>
